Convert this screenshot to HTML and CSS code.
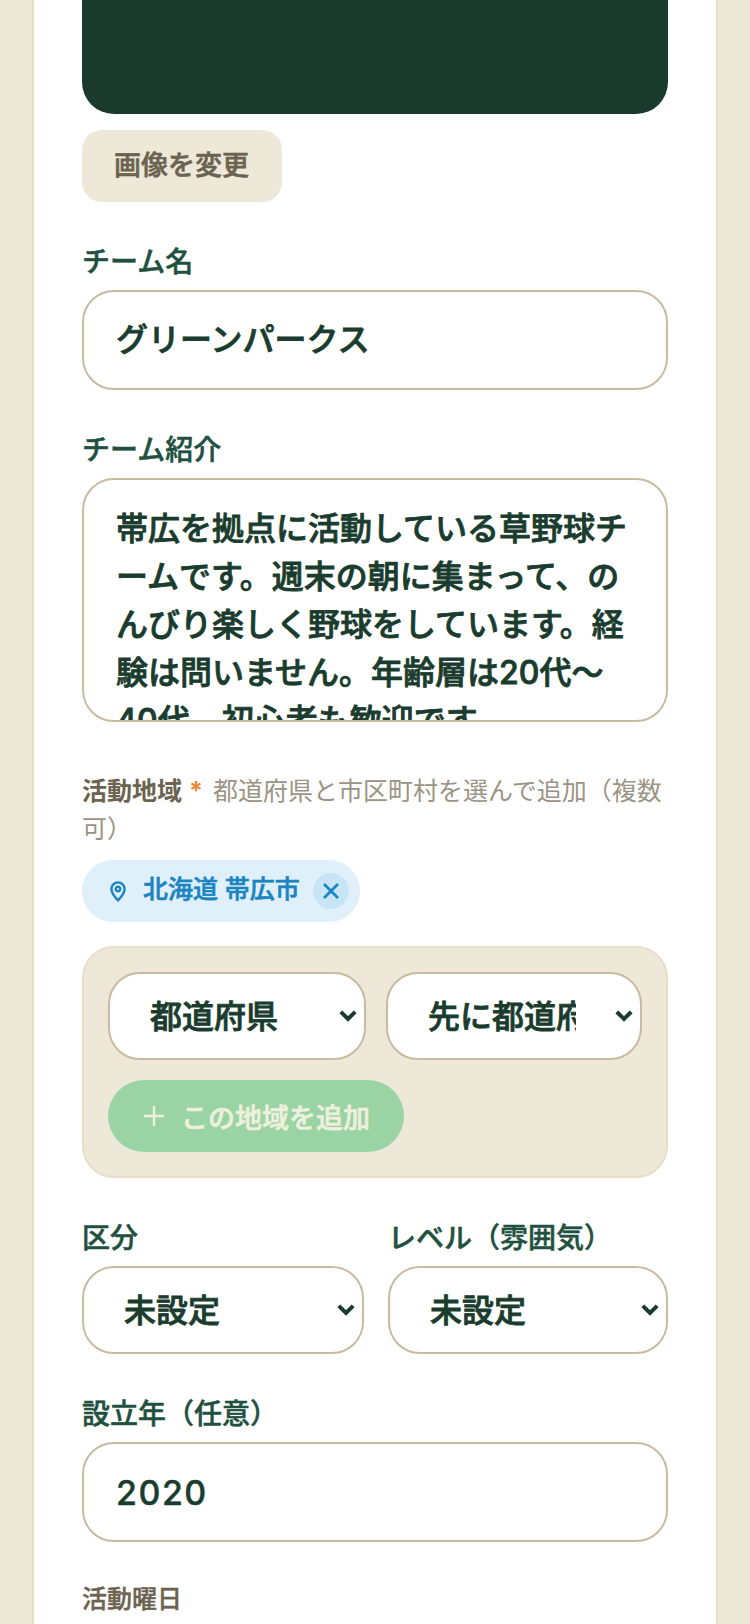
FILE: index.html
```html
<!DOCTYPE html>
<html lang="ja">
  <head>
    <meta charset="UTF-8" />
    <meta name="viewport" content="width=device-width, initial-scale=1.0" />
    <title>チーム編集</title>
    <link rel="stylesheet" href="styles.css">
  </head>
  <body>
    <main class="card">
      <div class="cover"></div>
      <button type="button" class="change-image">画像を変更</button>

      <form class="team-form">
        <div class="field">
          <label class="field-label" for="name">チーム名</label>
          <input class="text-input text-input-jp" type="text" id="name" value="グリーンパークス" />
        </div>

        <div class="field field-area">
          <label class="field-label" for="intro">チーム紹介</label>
          <textarea class="text-area" id="intro">帯広を拠点に活動している草野球チームです。週末の朝に集まって、のんびり楽しく野球をしています。経験は問いません。年齢層は20代〜40代。初心者も歓迎です。</textarea>
        </div>

        <div class="field">
          <p class="area-label"><b>活動地域</b> <span class="required">*</span>都道府県と市区町村を選んで追加（複数<br>可）</p>
          <div class="chips">
            <span class="chip">
              <svg class="chip-pin" width="16" height="21" viewBox="0 0 16 21" fill="none" stroke="currentColor" stroke-width="2.4">
                <path d="M8 19.4C4.4 15.6 1.4 11.8 1.4 8a6.6 6.6 0 0 1 13.2 0c0 3.8-3 7.6-6.6 11.4z" stroke-linejoin="round" />
                <circle cx="8" cy="8" r="2.3" />
              </svg>
              <span class="chip-text">北海道 帯広市</span>
              <button type="button" class="chip-remove" aria-label="削除">
                <svg width="18" height="18" viewBox="0 0 18 18" fill="none" stroke="currentColor" stroke-width="2.8">
                  <path d="M2 2l14 14M16 2L2 16" />
                </svg>
              </button>
            </span>
          </div>
          <div class="area-panel">
            <div class="select-row select-row-tight">
              <select class="select"><option>都道府県</option></select>
              <select class="select"><option>先に都道府県を選択</option></select>
            </div>
            <button type="button" class="add-area" disabled>
              <svg width="20" height="20" viewBox="0 0 20 20" stroke="currentColor" stroke-width="2.4">
                <path d="M10 0v20M0 10h20" />
              </svg>
              この地域を追加
            </button>
          </div>
        </div>

        <div class="select-row">
          <div class="field">
            <label class="field-label" for="kind">区分</label>
            <select class="select" id="kind"><option>未設定</option></select>
          </div>
          <div class="field">
            <label class="field-label" for="level">レベル（雰囲気）</label>
            <select class="select" id="level"><option>未設定</option></select>
          </div>
        </div>

        <div class="field">
          <label class="field-label" for="year">設立年（任意）</label>
          <input class="text-input text-input-year" type="text" id="year" value="2020" />
        </div>

        <div class="field">
          <p class="days-label">活動曜日</p>
        </div>
      </form>
    </main>
  </body>
</html>
```

FILE: styles.css
```css
* {
  box-sizing: border-box;
}
html,
body {
  height: 100%;
}
body {
  margin: 0;
  padding: 0 32px;
  background-color: #ede8d8;
  color: #1a3c2e;
  font-family: "Inter", "Noto Sans CJK JP", sans-serif;
  overflow: hidden;
}
.card {
  min-height: 100%;
  padding: 0 48px;
  background-color: #fff;
  border-left: 2px solid #e5dcc9;
  border-right: 2px solid #e5dcc9;
}
.cover {
  height: 114px;
  background-color: #1a3a2c;
  border-radius: 0 0 32px 32px;
}
.change-image {
  display: block;
  height: 72px;
  margin-top: 16px;
  padding: 0 33px 6px 32px;
  border: 0;
  border-radius: 20px;
  background-color: #ede8d8;
  color: #6b6350;
  font: 500 27px "Inter", "Noto Sans CJK JP", sans-serif;
  -webkit-text-stroke: 0.6px #6b6350;
}
.team-form {
  display: flex;
  flex-direction: column;
  gap: 40px;
  margin-top: 40px;
}
.field-label {
  display: block;
  margin-bottom: 8px;
  color: #1f5040;
  font-size: 28px;
  font-weight: 500;
  line-height: 40px;
  -webkit-text-stroke: 0.5px #1f5040;
}
.text-input,
.text-area,
.select {
  display: block;
  width: 100%;
  border: 2px solid #c8bba0;
  border-radius: 32px;
  background-color: #fff;
  color: #1a3c2e;
  font: 500 32px "Inter", "Noto Sans CJK JP", sans-serif;
  outline: none;
  -webkit-text-stroke: 0.8px #1a3c2e;
}
.text-input {
  height: 100px;
  padding: 0 32px;
}
.text-input-jp {
  padding-bottom: 6px;
}
.text-input-year {
  font-size: 34px;
  letter-spacing: 1.5px;
  -webkit-text-stroke: 0.4px #1a3c2e;
}
.text-area {
  height: 244px;
  padding: 25px 32px;
  line-height: 48px;
  overflow: hidden;
  resize: none;
}
.field-area {
  padding-bottom: 10px;
}
.select {
  height: 88px;
  padding: 0 64px 0 40px;
  appearance: none;
  background-image: url("data:image/svg+xml,%3Csvg xmlns='http://www.w3.org/2000/svg' width='18' height='12' viewBox='0 0 18 12'%3E%3Cpath d='M1.8 1.8L9 9l7.2-7.2' fill='none' stroke='%231a3c2e' stroke-width='4'/%3E%3C/svg%3E");
  background-repeat: no-repeat;
  background-position: right 7px center;
}
.area-label {
  margin: 0;
  color: #9b9484;
  font-size: 25px;
  line-height: 38px;
}
.area-label b {
  color: #6b6350;
}
.required {
  margin: 0 10px 0 0;
  color: #e8873a;
  font-weight: 700;
}
.chips {
  display: flex;
  margin-top: 12px;
}
.chip {
  display: inline-flex;
  align-items: center;
  height: 62px;
  padding: 0 11px 0 28px;
  border-radius: 31px;
  background-color: #e0f0fb;
  color: #1a85c0;
  font-size: 25px;
  font-weight: 500;
}
.chip-text {
  padding-bottom: 8px;
  -webkit-text-stroke: 0.6px #1a85c0;
}
.chip-pin {
  margin-right: 17px;
}
.chip-remove {
  display: flex;
  align-items: center;
  justify-content: center;
  width: 36px;
  height: 36px;
  margin-left: 13px;
  padding: 0;
  border: 0;
  border-radius: 50%;
  background-color: #c8e5f6;
  color: #1a85c0;
}
.area-panel {
  margin-top: 24px;
  padding: 24px;
  border: 2px solid #e5dec9;
  border-radius: 32px;
  background-color: #ede8d8;
}
.select-row {
  display: grid;
  grid-template-columns: 282px 1fr;
  gap: 24px;
}
.select-row-tight {
  grid-template-columns: 258px 1fr;
  gap: 20px;
}
.add-area {
  display: flex;
  align-items: center;
  gap: 17px;
  height: 72px;
  margin-top: 20px;
  padding: 0 34px 0 36px;
  border: 0;
  border-radius: 36px;
  background-color: #9bd4a4;
  color: #eef0de;
  font: 500 27px "Inter", "Noto Sans CJK JP", sans-serif;
  -webkit-text-stroke: 0.6px #eef0de;
}
.days-label {
  margin: 0;
  color: #6b6350;
  font-size: 25px;
  font-weight: 500;
  line-height: 34px;
  -webkit-text-stroke: 0.4px #6b6350;
}
```
